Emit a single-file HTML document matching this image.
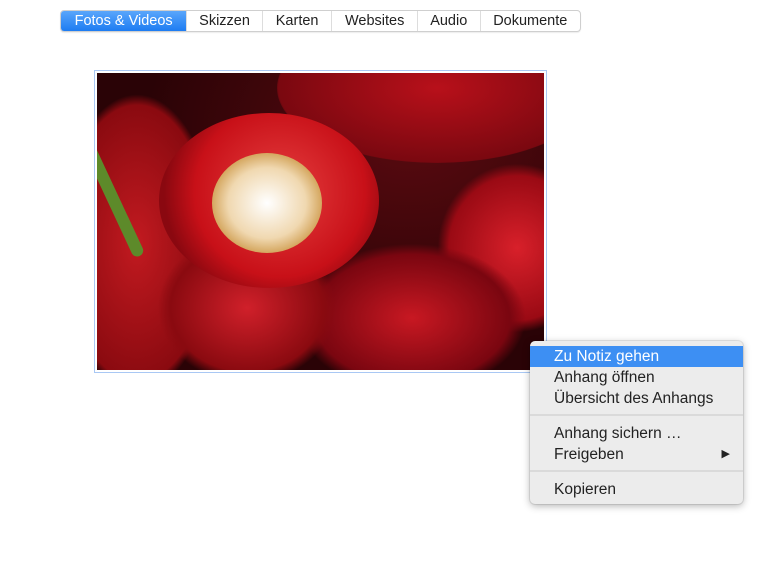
<!DOCTYPE html><html><head><style>
body{margin:0;width:770px;height:578px;background:#fff;font-family:"Liberation Sans",sans-serif;position:relative;overflow:hidden}
.tabs{position:absolute;left:60px;top:10px;height:20px;width:519px;border:1px solid #cfcfcf;border-radius:4px;display:flex;box-shadow:0 1px 1px rgba(0,0,0,.08);overflow:hidden}
.tabs div{font-size:14.5px;line-height:20px;text-align:center;color:#222;border-left:1px solid #ddd;white-space:nowrap}
.tabs div:first-child{border-left:none;background:linear-gradient(#5aa6fb,#1d7cf2);color:#fff}
.frame{position:absolute;left:94px;top:70px;width:451px;height:301px;border:1px solid #a9c8f4}
.img{position:absolute;left:2px;top:2px;width:447px;height:297px;overflow:hidden;background:radial-gradient(ellipse at 70% 20%,#5a0a10,#2a0306 60%),#3a0508}
.img div{position:absolute;border-radius:50%}
.menu{position:absolute;left:530px;top:341px;width:213px;height:163px;background:#ececec;border-radius:5px;box-shadow:0 2px 8px rgba(0,0,0,.3),0 0 0 1px rgba(0,0,0,.08)}
.mi{position:absolute;left:0;width:213px;height:21px;line-height:21px;font-size:15.5px;color:#222;padding-left:24px;box-sizing:border-box;white-space:nowrap}
.sep{position:absolute;left:0;width:213px;height:2px;background:#dadada}
</style></head><body>
<div class="tabs"><div style="width:126px">Fotos &amp; Videos</div><div style="width:75px">Skizzen</div><div style="width:69px">Karten</div><div style="width:85px">Websites</div><div style="width:62px">Audio</div><div style="width:100px">Dokumente</div></div>
<div class="frame"><div class="img">
<div style="left:180px;top:-60px;width:320px;height:150px;background:radial-gradient(#b8101a,#7a0810 70%,transparent 72%)"></div>
<div style="left:-40px;top:20px;width:160px;height:300px;background:radial-gradient(#c21a20,#8a0a10 65%,transparent 70%)"></div>
<div style="left:5px;top:40px;width:12px;height:150px;border-radius:6px;background:#5d8a2a;transform:rotate(-25deg)"></div>
<div style="left:340px;top:90px;width:160px;height:170px;background:radial-gradient(#d8202a,#9a0a14 60%,transparent 70%)"></div>
<div style="left:200px;top:170px;width:230px;height:150px;background:radial-gradient(#c81822,#7a0610 60%,transparent 70%)"></div>
<div style="left:60px;top:160px;width:180px;height:150px;background:radial-gradient(#d0202a,#8a0a10 60%,transparent 70%)"></div>
<div style="left:62px;top:40px;width:220px;height:175px;background:radial-gradient(circle at 55% 45%,#e64040,#c81018 55%,#8a0810 75%)"></div>
<div style="left:115px;top:80px;width:110px;height:100px;background:radial-gradient(#fff,#f0d8b0 50%,#c8903a 80%,#b01018 95%)"></div>
</div></div>
<div class="menu">
<div class="mi" style="top:5px;background:#3d8ff3;color:#fff">Zu Notiz gehen</div>
<div class="mi" style="top:26px">Anhang öffnen</div>
<div class="mi" style="top:47px">Übersicht des Anhangs</div>
<div class="sep" style="top:73px"></div>
<div class="mi" style="top:82px">Anhang sichern …</div>
<div class="mi" style="top:103px">Freigeben<span style="position:absolute;right:13px;font-size:11px">▶</span></div>
<div class="sep" style="top:129px"></div>
<div class="mi" style="top:138px">Kopieren</div>
</div>
</body></html>
